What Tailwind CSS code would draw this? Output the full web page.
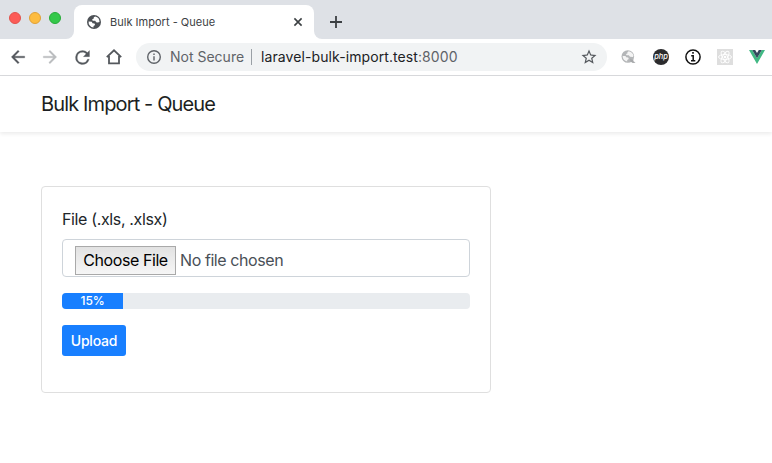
<!DOCTYPE html>
<html lang="en">
<head>
<meta charset="utf-8">
<title>Bulk Import - Queue</title>
<script src="https://cdn.jsdelivr.net/npm/@tailwindcss/browser@4"></script>
</head>
<body class="w-[772px] h-[463px] overflow-hidden bg-white font-['Inter',sans-serif] text-[#212529] whitespace-nowrap">
<div class="flex h-[39px] bg-[#dee1e6]">
  <div class="flex w-[66px] gap-2 pl-[9px] pt-3">
    <i class="size-3 rounded-full border border-[#e2524c] bg-[#fc5b57]"></i>
    <i class="size-3 rounded-full border border-[#e0a137] bg-[#fdbc40]"></i>
    <i class="size-3 rounded-full border border-[#27ab38] bg-[#34c84a]"></i>
  </div>
  <div class="w-2 self-end h-2 bg-white"><div class="size-2 rounded-br-lg bg-[#dee1e6]"></div></div>
  <div class="mt-[5px] flex h-[34px] w-[240px] items-center rounded-t-lg bg-white pl-[13px] pr-[11px]">
    <svg class="size-[14px]" viewBox="0 0 14 14"><circle cx="7" cy="7" r="7" fill="#4d5156"/><path d="M8.2 1.5 6.8 2.2v1.4L5.2 4.3l.4 1.4h2.6l1 1.5 1.6.2 1.7-.5A5.5 5.5 0 0 0 8.2 1.5zM1.6 6.4a5.5 5.5 0 0 0 4.9 6.1V11l1.6-1.1-.6-1.4-2-.3-.7-1.4z" fill="#fff"/></svg>
    <span class="ml-[9px] text-[11px] tracking-[0.02px] text-[#3c4043]">Bulk Import - Queue</span>
    <svg class="ml-auto size-[10px]" viewBox="0 0 10 10" stroke="#3c4043" stroke-width="1.6"><path d="m1.4 1.4 7.2 7.2m0-7.2L1.4 8.6"/></svg>
  </div>
  <div class="w-2 self-end h-2 bg-white"><div class="size-2 rounded-bl-lg bg-[#dee1e6]"></div></div>
  <svg class="ml-[8px] mt-4 size-3" viewBox="0 0 12 12" stroke="#3c4043" stroke-width="1.8"><path d="M6 0v12M0 6h12"/></svg>
</div>
<div class="flex h-[37px] items-center border-b border-[#d9dadd] pl-2">
  <svg class="size-5" viewBox="0 0 24 24" fill="#54585d" stroke="#54585d" stroke-width=".4"><path d="M20 11H7.83l5.59-5.59L12 4l-8 8 8 8 1.41-1.41L7.83 13H20v-2z"/></svg>
  <svg class="ml-3 size-5" viewBox="0 0 24 24" fill="#babcbe" stroke="#babcbe" stroke-width=".4"><path d="m12 4-1.41 1.41L16.17 11H4v2h12.17l-5.58 5.59L12 20l8-8z"/></svg>
  <svg class="ml-3 size-[21px]" viewBox="0 0 24 24" fill="#54585d" stroke="#54585d" stroke-width=".3"><path d="M17.65 6.35A7.958 7.958 0 0 0 12 4a8 8 0 1 0 7.73 10h-2.08A6 6 0 1 1 12 6c1.66 0 3.14.69 4.22 1.78L13 11h7V4z"/></svg>
  <svg class="ml-[13px] size-4" viewBox="0 0 16 16" fill="none" stroke="#54585d" stroke-width="1.8"><path d="M.8 8.2 8 1.3l7.2 6.9M3 7v7.3h10V7"/></svg>
  <div class="ml-[14px] flex h-7 w-[471px] items-center rounded-full bg-[#f1f3f4] pl-[11px] pr-[9px] text-sm">
    <svg class="size-[14px]" viewBox="0 0 14 14" fill="none" stroke="#5f6368" stroke-width="1.4"><circle cx="7" cy="7" r="6.3"/><path d="M7 6.2v4.2M7 3.4v1.5"/></svg>
    <span class="ml-[9px] w-[74px] text-[#5f6368]">Not Secure</span>
    <i class="ml-[7px] h-4 w-px bg-[#9aa0a6]"></i>
    <span class="ml-[9px] tracking-[0.09px] text-[#202124]">laravel-bulk-import.test<span class="text-[#5f6368]">:8000</span></span>
    <svg class="ml-auto size-[18px]" viewBox="0 0 24 24" fill="#54585d"><path d="m22 9.24-7.19-.62L12 2 9.19 8.63 2 9.24l5.46 4.73L5.82 21 12 17.27 18.18 21l-1.63-7.03zM12 15.4l-3.76 2.27 1-4.28-3.32-2.88 4.38-.38L12 6.1l1.71 4.04 4.38.38-3.32 2.88 1 4.28z"/></svg>
  </div>
  <svg class="ml-[14px] size-4" viewBox="0 0 16 16"><circle cx="6.8" cy="7.5" r="6.3" fill="#b4b6b8"/><path d="M7.6 2.2 6.4 3.2v1.2L5 5l.5 1.3h2.3L9 7.8l3 .2.5-1.3C12 4.3 10 2.5 7.6 2.2zM1.6 6.9c0 3 2 5 4.6 5.5v-1.3l1.6-1-.6-1.5-2-.3-.7-1.4z" fill="#f4f4f4"/><path d="m9.2 9.4 2 1.6 1.5-.5-.5 1.6 2.4 1.6-2.8.3-2.4-1.4z" fill="#a6a8aa"/></svg>
  <svg class="ml-4 size-4" viewBox="0 0 16 16"><circle cx="8" cy="8" r="8" fill="#2b2b2d"/><text x="8" y="10.2" font-family="Inter,sans-serif" font-size="7.4" font-style="italic" font-weight="500" fill="#fff" text-anchor="middle">php</text></svg>
  <svg class="ml-4 size-4" viewBox="0 0 16 16" fill="none" stroke="#111" stroke-width="1.5"><circle cx="8" cy="8" r="7.1"/><path d="M6.2 6.7h2v5M6 11.8h4.3"/><path d="M7.2 3.9h1.6" stroke-width="1.7"/></svg>
  <svg class="ml-4 size-4" viewBox="0 0 16 16" fill="none"><path fill="#dedede" d="M0 0h16v16H0z"/><g stroke="#fff" stroke-width=".9"><ellipse cx="8" cy="8" rx="6.5" ry="2.5"/><ellipse cx="8" cy="8" rx="6.5" ry="2.5" transform="rotate(60 8 8)"/><ellipse cx="8" cy="8" rx="6.5" ry="2.5" transform="rotate(120 8 8)"/></g><circle cx="8" cy="8" r="1.3" fill="#fff"/></svg>
  <svg class="ml-4 h-[14px] w-4" viewBox="0 0 16 14"><path fill="#41b883" d="M0 0h3.2L8 8.2 12.8 0H16L8 14z"/><path fill="#35495e" d="M3.2 0h3L8 3.1 9.8 0h3L8 8.3z"/></svg>
</div>
<header class="flex h-14 items-center bg-white pl-[41px] shadow-[0_2px_4px_rgba(0,0,0,0.08)]">
  <span class="text-xl tracking-[-0.87px] text-[#1c1f22]">Bulk Import - Queue</span>
</header>
<main class="ml-[41px] mt-[54px] h-[207px] w-[450px] rounded border border-[#dfdfdf] p-5">
  <label class="block h-6 text-base leading-6 tracking-[-0.36px]">File (.xls, .xlsx)</label>
  <div class="mt-2 flex h-[38px] items-start rounded border border-[#ced4da] pl-3 pt-1.5 text-base tracking-[-0.42px] text-[#495057]">
    <button class="h-[29px] w-[101px] border border-[#a9a9a9] bg-gradient-to-b from-[#e2e2e2] to-[#f6f6f6] leading-[27px] text-black">Choose File</button>
    <span class="ml-[4px] leading-[29px]">No file chosen</span>
  </div>
  <div class="mt-4 h-4 overflow-hidden rounded bg-[#e9ecef]">
    <div class="h-4 bg-[#187fff] text-center text-xs leading-4 font-medium text-white" style="width:15%">15%</div>
  </div>
  <button class="mt-4 block h-[31px] w-16 rounded-[3px] bg-[#187fff] text-sm font-medium tracking-[-0.2px] text-white">Upload</button>
</main>
</body>
</html>
